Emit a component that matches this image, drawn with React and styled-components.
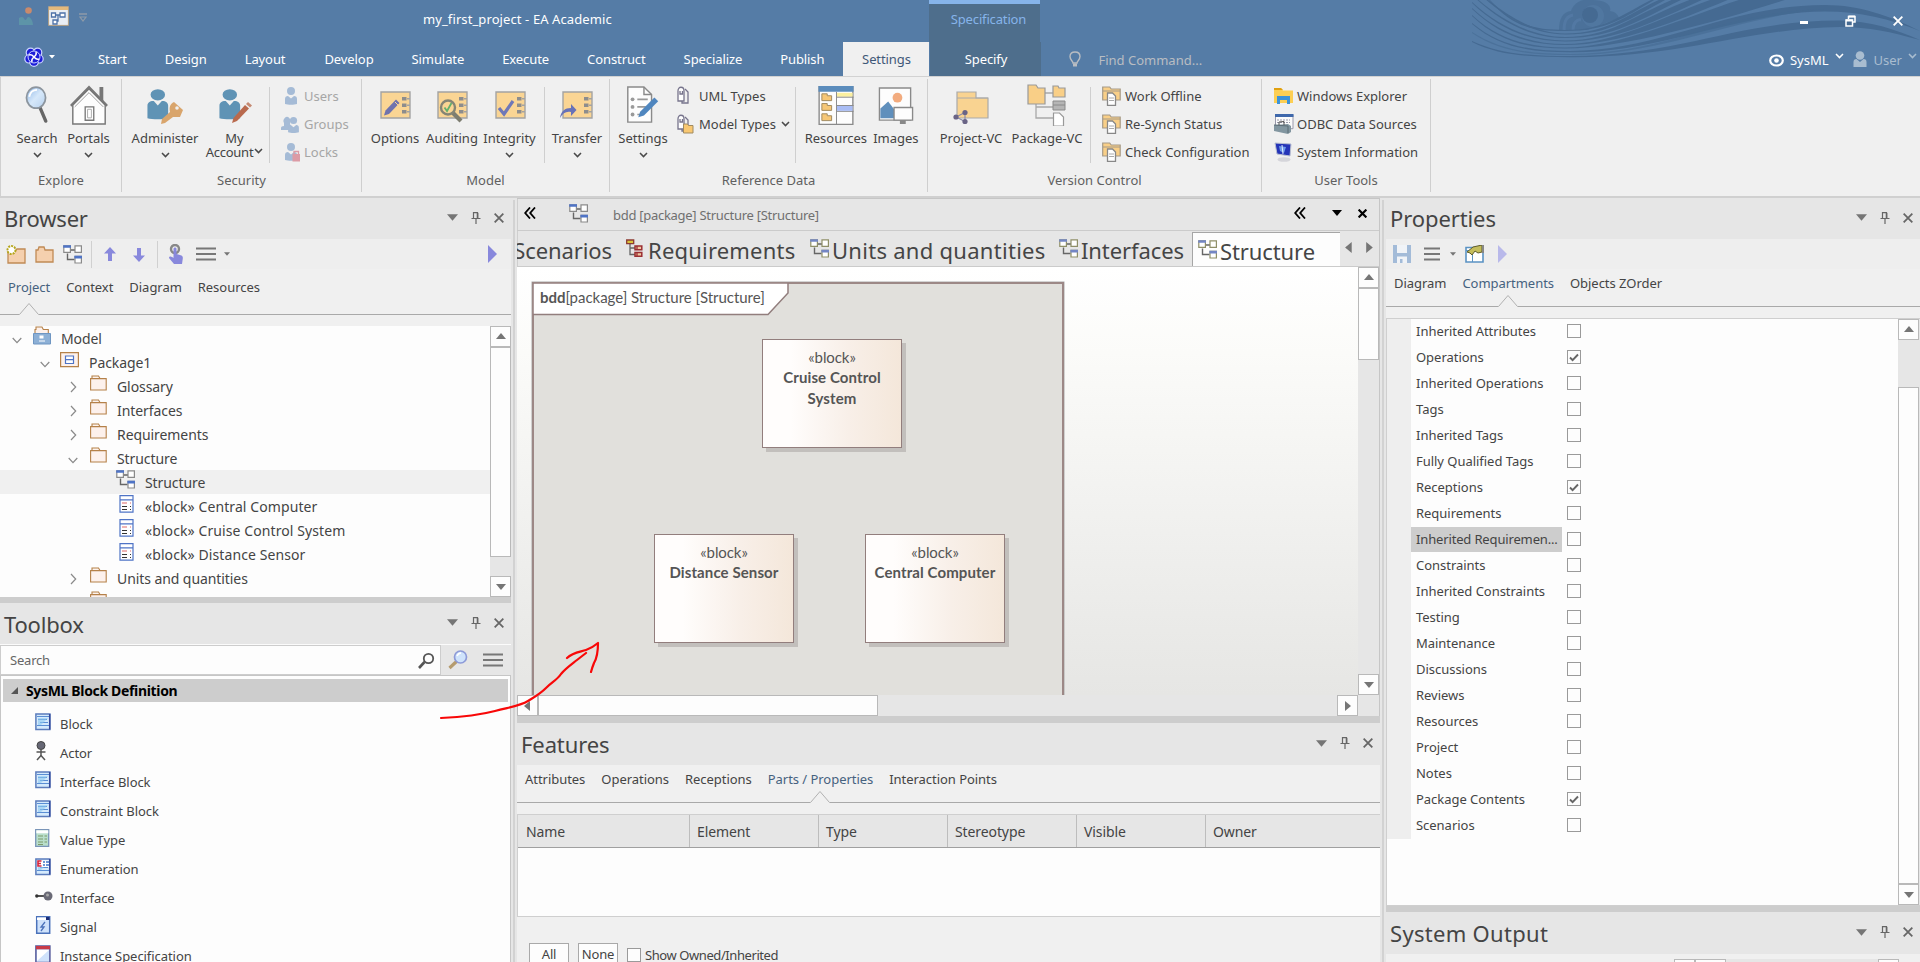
import React from "react";
import styled, { createGlobalStyle, css } from "styled-components";

const Global = createGlobalStyle`
  * { box-sizing: border-box; }
  html, body { margin: 0; padding: 0; }
  body {
    width: 1920px; height: 962px; overflow: hidden; background: #e6e6e6;
    font-family: "Noto Sans", "Open Sans", sans-serif; font-size: 13px; color: #444;
    white-space: nowrap; line-height: 18px;
  }
  svg { display: block; flex: none; }
`;

/* ---------- window frame ---------- */
const Window = styled.div`
  position: relative; width: 1920px; height: 962px; overflow: hidden;
  display: flex; flex-direction: column;
`;
const Header = styled.header`
  position: relative; height: 76px; flex: none; background: #557ca6; color: #fff;
  display: flex; flex-direction: column;
`;
const WaveArt = styled.svg`position: absolute; right: 0; top: 0;`;
const TitleRow = styled.div`
  position: relative; height: 42px; display: flex; align-items: flex-start;
`;
const QuickBar = styled.div`
  width: 423px; padding: 6px 0 0 19px; display: flex; gap: 0;
  svg + svg { margin-left: 10px; }
`;
const AppTitle = styled.div`width: 506px; padding-top: 10px; letter-spacing: 0.1px;`;
const ContextTitle = styled.div`
  width: 111px; height: 42px; border-top: 4px solid #86b4ea; background: #4e6e8c;
  color: #86b4ea; text-align: center; padding: 6px 0 0 8px; letter-spacing: -0.15px;
`;
const WindowButtons = styled.div`
  margin-left: auto; padding: 14px 17px 0 0; display: flex; gap: 37px; align-items: center;
`;
const TabRow = styled.div`position: relative; display: flex; height: 34px; align-items: stretch;`;
const AppMenu = styled.div`width: 79px; padding: 5px 0 0 24px; display: flex; gap: 5px;`;
const RibbonTab = styled.div`
  padding: 8px 19px 0; color: #fff; letter-spacing: -0.09px;
  ${(p) => p.$wide && css`padding-right: 20px;`}
  ${(p) => p.$active && css`background: #f0f0f0; color: #3f5878; width: 86px; margin-left: 0; padding: 8px 0 0; text-align: center;`}
  ${(p) => p.$context && css`background: #4e6e8c; width: 111px; margin-left: 1px; padding: 8px 0 0; text-align: center;`}
`;
const FindBox = styled.div`
  display: flex; padding: 9px 0 0 28px; gap: 17px; color: #b9bdc2;
`;
const UserArea = styled.div`
  margin-left: auto; padding: 9px 3px 0 0; display: flex;
`;
const UserText = styled.span`
  margin: 0 6px 0 ${(p) => p.$left}px; color: ${(p) => p.$tone};
`;
const UserChevron = styled.span`padding-top: 2px; margin-right: ${(p) => p.$r || 0}px;`;

/* ---------- ribbon ---------- */
const Ribbon = styled.section`
  height: 122px; flex: none; background: #f0f0f0; border-top: 1px solid #d2d2d2;
  border-bottom: 2px solid #d0d0d0; border-left: 1px solid #d0d0d0; display: flex; padding-top: 2px;
`;
const Group = styled.div`
  width: ${(p) => p.$w}px; height: 113px; border-right: 1px solid #cfcfcf;
  display: flex; flex-direction: column;
`;
const GroupBody = styled.div`display: flex; height: 92px; padding-left: ${(p) => p.$pad}px;`;
const GroupName = styled.div`text-align: center; color: #606060;`;
const Divider = styled.div`width: 1px; height: 76px; margin: 8px 5px 0; background: #cfcfcf;`;
const BigButtonBox = styled.div`
  width: ${(p) => p.$w}px; display: flex; flex-direction: column; align-items: center;
`;
const BigIcon = styled.div`height: 52px; display: flex; align-items: center; justify-content: center;`;
const BigLabel = styled.div`height: 14px; line-height: 14px;`;
const BigChevron = styled.div`padding-top: 7px;`;
const SecondLine = styled.div`
  display: flex; gap: 1px; line-height: 14px; letter-spacing: -0.25px;
  svg { margin-top: 3px; }
`;
const SmallList = styled.div`
  display: flex; flex-direction: column; padding-left: ${(p) => p.$pad}px; padding-top: 3px;
`;
const SmallItem = styled.div`
  height: 28px; display: flex; align-items: center; gap: ${(p) => p.$gap || 4}px;
  color: ${(p) => (p.$dim ? "#a6a6a6" : "#444")};
`;

/* ---------- docked panels ---------- */
const Workspace = styled.main`flex: 1; display: flex; min-height: 0;`;
const Column = styled.div`
  width: ${(p) => p.$w}px; display: flex; flex-direction: column; min-height: 0; flex: none;
`;
const VSplit = styled.div`
  width: ${(p) => p.$w}px; flex: none; background: #e6e6e6; padding: 2px 2px 0 2px;
  &::before { content: ""; display: block; height: 100%; background: #d2d2d2; }
`;
const HSplit = styled.div`height: ${(p) => p.$h}px; flex: none; background: #cdcdcd;`;
const PanelHead = styled.div`
  height: ${(p) => p.$h}px; flex: none; padding: 0 7px 0 ${(p) => p.$left}px; background: #e6e6e6;
  display: flex; align-items: center; justify-content: space-between;
`;
const PanelTitle = styled.h2`
  margin: 0; font-weight: 400; font-size: 22px; line-height: 30px; letter-spacing: ${(p) => p.$ls || -0.2}px; color: #444;
  padding-bottom: ${(p) => p.$up || 0}px;
`;
const PanelTools = styled.div`display: flex; align-items: center; gap: 13px; padding-bottom: 2px;`;
const Toolbar = styled.div`
  height: 30px; flex: none; background: #eeeeee; display: flex; align-items: center;
  padding: 0 14px 0 ${(p) => p.$left}px;
`;
const ToolSlot = styled.div`
  width: ${(p) => p.$w}px; display: flex; justify-content: flex-start; padding-left: ${(p) => p.$pad || 0}px;
  ${(p) => p.$push && css`margin-left: auto;`}
`;
const ToolDivider = styled.div`width: 1px; height: 27px; background: #d0d0d0; margin-right: ${(p) => p.$r}px;`;
const TabStrip = styled.div`
  height: ${(p) => p.$h}px; flex: none; background: #f0f0f0; padding: 0 0 0 ${(p) => p.$left}px;
  display: flex; gap: 16px; border-bottom: 1px solid #a9a9a9; position: relative;
`;
const StripTab = styled.div`
  position: relative; padding-top: ${(p) => p.$top}px; color: ${(p) => (p.$active ? "#46627f" : "#444")};
  letter-spacing: -0.04px;
`;
const Notch = styled.svg`position: absolute; left: calc(50% - 10px); bottom: -1px;`;
const Gap = styled.div`height: ${(p) => p.$h}px; flex: none; background: #f0f0f0;`;

/* ---------- scroll bars ---------- */
const ScrollTrack = styled.div`
  flex: none; display: flex; background: #e6e6e6;
  ${(p) => (p.$across ? css`height: 21px; flex-direction: row; padding-right: 21px;` : css`width: 21px; flex-direction: column;`)}
`;
const ScrollButton = styled.div`
  width: 21px; height: 21px; flex: none; background: #fdfdfd; border: 1px solid #b9b9b9;
  display: flex; align-items: center; justify-content: center;
`;
const ScrollThumb = styled.div`
  background: #fdfdfd; border: 1px solid #b9b9b9; flex: none;
  ${(p) => (p.$across ? css`width: ${p.$len}px; height: 21px;` : css`height: ${p.$len}px; width: 21px; margin-top: ${p.$at || 0}px;`)}
`;
const Spacer = styled.div`flex: 1;`;

/* ---------- browser tree ---------- */
const TreeArea = styled.div`height: 271px; flex: none; display: flex; background: #fdfdfd; overflow: hidden;`;
const TreeList = styled.div`flex: 1; display: flex; flex-direction: column; overflow: hidden;`;
const TreeRow = styled.div`
  height: 24px; flex: none; display: flex; align-items: center; padding-left: ${(p) => p.$depth * 28 + 12}px;
  font-size: 14px; letter-spacing: ${(p) => (p.$wide ? 0.09 : -0.08)}px; background: ${(p) => (p.$selected ? "#f0f0f0" : "transparent")};
`;
const Expander = styled.span`width: 19px; padding-top: ${(p) => (p.$open ? 4 : 1)}px;`;
const TreeIcon = styled.span`width: 30px; height: 20px; margin-top: -5px; display: flex; align-items: center; padding-left: ${(p) => p.$pad}px;`;
const TreeText = styled.span`padding-top: 1px;`;

/* ---------- toolbox ---------- */
const SearchRow = styled.div`
  height: 31px; flex: none; border-top: 1px solid #fbfbfb; display: flex; align-items: center; background: #e6e6e6;
`;
const SearchBox = styled.div`
  width: 441px; height: 30px; border: 1px solid #cdcdcd; background: #fdfdfd; color: #666;
  display: flex; align-items: center; justify-content: space-between; padding: 0 5px 0 9px; letter-spacing: -0.2px;
`;
const ToolList = styled.div`
  flex: 1; background: #fdfdfd; border: 1px solid #c6c6c6; border-bottom: 0; overflow: hidden; padding: 3px 2px 0;
`;
const ToolHeader = styled.div`
  height: 23px; background: #cdcdcd; color: #000; font-weight: 700; font-size: 14px; letter-spacing: -0.34px;
  display: flex; align-items: center; gap: 8px; padding-left: 8px; margin-bottom: 7px;
`;
const ToolItem = styled.div`
  height: 29px; display: flex; align-items: center; padding-left: 30px; letter-spacing: -0.06px;
`;
const ToolIcon = styled.span`width: 27px; display: flex; margin-top: -3px; padding-left: 2px;`;

/* ---------- diagram view ---------- */
const ViewFrame = styled.div`
  height: 518px; flex: none; border: 1px solid #c6c6c6; border-bottom: 0; border-left-width: 0;
  display: flex; flex-direction: column; box-shadow: inset 1px 0 #cfcfcf;
`;
const Breadcrumb = styled.div`
  height: 32px; flex: none; display: flex; align-items: center; padding: 0 12px 3px 7px;
  border-bottom: 1px solid #cbcbcb; color: #707070;
`;
const CrumbText = styled.span`flex: 1; padding: 3px 0 0 25px; letter-spacing: -0.28px;`;
const CrumbTools = styled.div`
  display: flex; align-items: center; color: #000;
  svg:nth-child(2) { margin: 0 16px 0 26px; }
`;
const DocTabs = styled.div`
  height: 36px; flex: none; display: flex; overflow: hidden; border-bottom: 1px solid #cbcbcb;
`;
const DocTab = styled.div`
  display: flex; height: 36px; width: ${(p) => p.$w}px; flex: none; font-size: 22px; line-height: 30px; color: #454545;
  align-items: center; gap: ${(p) => p.$gap || 4}px; letter-spacing: ${(p) => p.$ls || -0.1}px; padding-top: 1px;
  svg { margin-top: -2px; }
  ${(p) => p.$clip && css`justify-content: flex-end; padding-right: 14px;`}
  ${(p) => p.$active && css`background: #fdfdfd; border: 1px solid #a6a6a6; border-bottom: 0; border-right: 0; padding-left: 5px; margin-top: 1px; padding-top: 0;`}
`;
const DocArrows = styled.div`display: flex; gap: 9px; padding: 11px 0 0 4px;`;
const CanvasRow = styled.div`height: 428px; flex: none; display: flex;`;
const Canvas = styled.div`
  position: relative; flex: 1; overflow: hidden; background: linear-gradient(#ffffff, #fbfbf9 20%, #e6e6e4);
  font-family: Lato, "Noto Sans", sans-serif; font-size: 15px; color: #555; letter-spacing: -0.08px;
`;
const Frame = styled.div`
  position: absolute; left: 15px; top: 15px; width: 532px; height: 440px; background: #e1e0dc;
  border: 2px solid #9c8886; box-shadow: 0 0 0 0.5px #aaa;
`;
const FrameName = styled.div`
  position: relative; width: 256px; height: 32px; padding: 3px 0 0 6px;
  svg { position: absolute; left: -1px; top: -1px; }
  span { position: relative; line-height: 20px; letter-spacing: -0.03px; }
`;
const Block = styled.div`
  position: absolute; left: ${(p) => p.$x}px; top: ${(p) => p.$y}px; width: 140px; height: 109px;
  border: 1.5px solid #927e7d; background: linear-gradient(90deg, #fffdfc 20%, #f8efe8 62%, #f4e7da);
  box-shadow: 4px 4px 0 #c2bfbc; text-align: center; line-height: 20px; padding: 7px 10px 0;
  white-space: normal;
  b { display: block; line-height: 21px; margin: 0 -10px; letter-spacing: 0.1px; }
`;

/* ---------- features ---------- */
const Table = styled.div`
  height: 103px; flex: none; border: 1px solid #cfcfcf; border-right: 0; background: #fdfdfd;
`;
const TableHead = styled.div`
  height: 33px; background: #e6e6e6; border-bottom: 1px solid #a0a0a0; display: flex; font-size: 14px; letter-spacing: -0.1px;
`;
const HeadCell = styled.div`
  width: ${(p) => p.$w}px; padding: 8px 0 0 7px; border-right: ${(p) => (p.$last ? 0 : 1)}px solid #bdbdbd;
  &:first-child { padding-left: 8px; }
`;
const FeatureActions = styled.div`
  flex: 1; background: #f0f0f0; display: flex; padding: 26px 0 0 12px; align-items: flex-start;
`;
const PushButton = styled.div`
  width: 40px; height: 24px; border: 1px solid #a9a9a9; background: #fdfdfd; text-align: center; padding-top: 1px; margin-right: 9px;
  letter-spacing: -0.2px;
`;
const OptionLabel = styled.span`padding: 3px 0 0 4px; letter-spacing: -0.42px;`;

/* ---------- properties ---------- */
const PropsArea = styled.div`
  height: 588px; flex: none; display: flex; border: 1px solid #cfcfcf; border-right: 0; background: #fdfdfd;
`;
const Gutter = styled.div`width: 24px; height: 520px; background: #eeeeee;`;
const PropList = styled.div`flex: 1;`;
const PropRow = styled.div`height: 26px; display: flex; align-items: flex-start;`;
const PropName = styled.div`
  width: 151px; height: 25px; padding: 3px 0 0 5px; margin-right: 5px; letter-spacing: -0.03px;
  background: ${(p) => (p.$selected ? "#cdcdcd" : "transparent")};
  ${(p) => p.$selected && css`letter-spacing: -0.15px;`}
`;
const CheckBox = styled.div`
  width: 14px; height: 14px; border: 1px solid #9a9a9a; background: #fdfdfd; margin-top: ${(p) => p.$top}px;
  display: flex; align-items: center; justify-content: center;
`;
const RightEdge = styled.div`width: 1px; background: #e6e6e6;`;
const OutputBar = styled.div`
  flex: 1; background: #f0f0f0; padding: 5px 21px 0 0; display: flex; justify-content: flex-end;
`;
const OutputBox = styled.div`
  width: ${(p) => p.$w}px; height: 12px; border: 1px solid #b9b9b9; background: ${(p) => (p.$track ? "#e6e6e6" : "#fdfdfd")};
  ${(p) => p.$track && css`border-color: #e6e6e6;`}
`;

const Stroke = styled.svg`position: absolute; left: 436px; top: 638px;`;

/* ---------- glyphs ---------- */
const Chevron = ({ c = "#4a4a4a" }) => (
  <svg width="9" height="6" viewBox="0 0 9 6"><path d="M1 1l3.5 3.6L8 1" fill="none" stroke={c} strokeWidth="1.5" /></svg>
);
const Tri = ({ dir, c = "#757575", s = 10 }) => {
  const d = { up: "M0 7L5 1l5 6z", down: "M0 2h10L5 8z", left: "M7 0v10L1 5z", right: "M2 0v10l6-5z" }[dir];
  return <svg width={s} height={s} viewBox="0 0 10 10"><path d={d} fill={c} /></svg>;
};
const Cross = ({ s = 9, c = "#666", w = 1.6 }) => (
  <svg width={s} height={s} viewBox="0 0 9 9"><path d="M.6.6l7.8 7.8M8.4.6L.6 8.4" stroke={c} strokeWidth={w} /></svg>
);
const Pin = () => (
  <svg width="10" height="12" viewBox="0 0 10 12"><path d="M2.5 0v6M2 .6h5M6.5 0v6M.5 6.5h9M5 7v5" fill="none" stroke="#666" strokeWidth="1.2" /><path d="M5.8 1h1.6v5H5.8z" fill="#666" /></svg>
);
const HeadTools = () => (
  <PanelTools><Tri dir="down" s={11} /><Pin /><Cross s={10} /></PanelTools>
);
const Guillemet = () => (
  <svg width="12" height="12" viewBox="0 0 12 12"><path d="M6 .5L1.2 6 6 11.5M11 .5L6.2 6l4.8 5.5" fill="none" stroke="#000" strokeWidth="1.8" /></svg>
);
const Lines = ({ w = 20 }) => (
  <svg width={w} height="14" viewBox={`0 0 ${w} 14`}><path d={`M0 1.5h${w}M0 7h${w}M0 12.5h${w}`} stroke="#777" strokeWidth="2.2" /></svg>
);
const DiagramIcon = ({ line = "#8a8a8a", head = "#4f74c6" }) => (
  <svg width="19" height="19" viewBox="0 0 19 19">
    <path d="M8 5h4M4.5 8.5v6h7" fill="none" stroke="#666" strokeWidth="1.4" />
    <g fill="#fff" stroke={line} strokeWidth="1.2"><path d="M.8.8h6.6v6.6H.8zM12 .8h6.4v6.6H12zM12 11.4h6.4V18H12z" /></g>
    <path d="M.2.2h7.8v2.6H.2zM11.4 10.8H19v2.8h-7.6z" fill={head} />
  </svg>
);
const ReqIcon = () => (
  <svg width="17" height="19" viewBox="0 0 17 19">
    <path d="M4 4v11.5h5M4 9h5" fill="none" stroke="#666" strokeWidth="1.3" />
    <path d="M.7 1h7v3.6h-7z" fill="#d9c43c" stroke="#8d3b32" strokeWidth="1.3" />
    <path d="M9 7h6.8v3.8H9zM9 13.5h6.8v3.8H9z" fill="#f0c9a0" stroke="#9b2f33" strokeWidth="1.5" /><path d="M11 7v4M11 13v4.5" stroke="#9b2f33" strokeWidth="1.3" />
  </svg>
);
const FolderIcon = () => (
  <svg width="17" height="17" viewBox="0 0 17 17"><path d="M2 3.5V1h6.5l1.5 2.5" fill="#fdf3ee" stroke="#b58149" strokeWidth="1.1" /><path d="M.6 3.6h15.6V15H.6z" fill="#fdf1ec" stroke="#b58149" strokeWidth="1.1" /></svg>
);
const ModelIcon = () => (
  <svg width="18" height="19" viewBox="0 0 18 19"><path d="M2 8V3.5h1V1h6l1.3 2.5h5V8" fill="#fdf1ec" stroke="#b58149" strokeWidth="1.1" /><path d="M.5 7.5h17V18H.5z" fill="#8db0d6" stroke="#6f96c2" /><path d="M6.5 9.5h4v3h-4z" fill="#fff" /><path d="M6 15h6" stroke="#fff" /></svg>
);
const PackageIcon = () => (
  <svg width="19" height="16" viewBox="0 0 19 16"><path d="M.6.6h17.8v14H.6z" fill="#fdf1ec" stroke="#b58149" strokeWidth="1.2" /><path d="M5.5 4h8v7.500h-8zM5.500 7.700h8" fill="#fff" stroke="#4f74c6" strokeWidth="1.2" /></svg>
);
const BlockIcon = () => (
  <svg width="15" height="18" viewBox="0 0 15 18"><path d="M1 .7h13v16.500H1zM1 4.800h13" fill="#fff" stroke="#4f74c6" strokeWidth="1.200" /><path d="M3 8h5M11 8h1" stroke="#e06a6a" strokeWidth="1.200" /><path d="M3 11.500h5M11 11.500h1M3 14.500h5M11 14.500h1" stroke="#333" strokeWidth="1.200" /></svg>
);

const PersonShape = ({ c }) => (
  <g fill={c} transform="translate(-2 3.5) scale(1.15 .9)"><circle cx="12" cy="7" r="6.300" /><path d="M3 33V19c0-3 2-5 5-5h.5L12 19l3.500-5h.5c3 0 5 2 5 5v14c-4 1.500-14 1.500-18 0z" /></g>
);
const Search3D = () => (
  <svg width="24" height="38" viewBox="0 0 24 39">
    <defs><linearGradient id="lens" x1="0" y1="0" x2="1" y2="1"><stop offset="0" stopColor="#8eb6e6" /><stop offset=".5" stopColor="#d6e8fa" /><stop offset="1" stopColor="#b5d0ee" /></linearGradient></defs>
    <path d="M15 22l6 14" stroke="#666" strokeWidth="3.500" strokeLinecap="round" /><ellipse cx="11" cy="12" rx="9.800" ry="10.800" fill="url(#lens)" stroke="#8c959e" strokeWidth="1.800" /><path d="M4 11c1-5 4-7 8-7" stroke="#fff" strokeWidth="2" fill="none" />
  </svg>
);
const House = () => (
  <svg width="40" height="40" viewBox="0 0 40 42">
    <path d="M31 16V2h4v18" fill="#777" /><path d="M3 21L20 4l17 17v20H3z" fill="#fdfdfd" stroke="#777" strokeWidth="1.500" /><path d="M1 22L20 2.500 39 22" fill="none" stroke="#777" strokeWidth="2.600" /><path d="M5 23L20 8l15 15" fill="none" stroke="#999" strokeWidth="1" /><path d="M16 23h9v14h-9z" fill="#fff" stroke="#777" strokeWidth="1.400" /><path d="M18.500 25.500h4v9h-4z" fill="none" stroke="#aaa" />
  </svg>
);
const AdminIcon = () => (
  <svg width="38" height="40" viewBox="0 0 38 40"><PersonShape c="#5f93b5" /><path d="M28 17l9 8-3 7-7 0-8 6-4 1 1-5 8-7c-1-5 0-8 4-10z" fill="#d9a56c" /><circle cx="31" cy="23" r="1.800" fill="#f0f0f0" /></svg>
);
const AccountIcon = () => (
  <svg width="34" height="40" viewBox="0 0 34 40"><PersonShape c="#5f93b5" /><path d="M14 38l1.500-5L27 20l4 3.500L19 36z" fill="#b96a4e" /><path d="M28 19l2-2 4 3.500-2 2z" fill="#c58a73" /></svg>
);
const Card = ({ children }) => (
  <svg width="36" height="40" viewBox="0 0 36 40" overflow="visible">
    <path d="M4 7h29v26H4z" fill="#fad594" stroke="#a3a3a3" strokeWidth="1.400" />
    <g fill="#8d8d8d"><path d="M25 12h4.500v3.500H25zM25 18.500h4.500V22H25zM25 25h4.500v3.500H25z" /></g>
    <path d="M30 13.700h3M30 20.200h3M30 26.700h3" stroke="#a3a3a3" strokeWidth="1.400" />{children}
  </svg>
);
const OptionsIcon = () => <Card><path d="M7 30.500l1.500-5L19 14.500l3.500 3.500L12 29z" fill="#6f73ae" /><path d="M18 17l3.500 3.500" stroke="#fad594" /></Card>;
const AuditIcon = () => (
  <Card><path d="M19 28l8 8" stroke="#7d7d70" strokeWidth="4.200" /><circle cx="14" cy="22.500" r="7" fill="#fad594" stroke="#858575" strokeWidth="2.400" /><path d="M10.500 22.500l2.500 3.500 4.500-8" fill="none" stroke="#63b06b" strokeWidth="1.800" /></Card>
);
const IntegrityIcon = () => <Card><path d="M7 23l5 6L21 16" fill="none" stroke="#6f78b8" strokeWidth="3.200" /></Card>;
const TransferIcon = () => <Card><path d="M1 33c1-7 5-10 11-10v-4l5.500 6-5.500 6v-4c-5-1-8 1-11 6z" fill="#6872b8" /></Card>;
const SettingsIcon = () => (
  <svg width="34" height="38" viewBox="0 0 34 40">
    <path d="M1 1h17l8 8v29H1z" fill="#fdfdfd" stroke="#8a8a8a" strokeWidth="1.500" /><path d="M18 1v8h8" fill="none" stroke="#8a8a8a" strokeWidth="1.500" />
    <g fill="#999"><circle cx="6" cy="14" r="2" /><circle cx="6" cy="22" r="2" /><circle cx="6" cy="30" r="2" /></g><path d="M11 14h11M11 22h9M11 30h3" stroke="#999" strokeWidth="1.800" />
    <path d="M12 33l2-6L29 12l4 4L18 31z" fill="#4f86bf" />
  </svg>
);
const ResourcesIcon = () => (
  <svg width="36" height="39" viewBox="0 0 36 40"><path d="M.7.7h34.600v38.600H.7z" fill="#fdfdfd" stroke="#8a8a8a" strokeWidth="1.400" /><path d="M0 0h36v6H0z" fill="#5b8cbc" /><path d="M19 7h16v4H19z" fill="#fbf0a0" /><path d="M18.500 6v33M19 11.500h17M19 20h17M19 26h17" stroke="#8a8a8a" /><path d="M19 20.500h16v5H19z" fill="#a9bdf5" />
    <g fill="#f6c777" stroke="#a08a60"><path d="M3.500 8v7h10V10H9V8zM3.500 18v7h10v-5H9v-2zM3.500 28.500v7h10v-5H9v-2z" /></g></svg>
);
const ImagesIcon = () => (
  <svg width="36" height="39" viewBox="0 0 36 40"><path d="M1 2h32v33H1z" fill="#fdfdfd" stroke="#8a8a8a" strokeWidth="1.400" /><circle cx="19.500" cy="12" r="5" fill="#f2ab7e" /><path d="M2 23l8-7 13 17H2z" fill="#5f8fbc" /><path d="M16 22h19v13H16z" fill="#fdfdfd" stroke="#8a8a8a" strokeWidth="1.400" /><path d="M22 35h6v4h-6z" fill="#888" /></svg>
);
const ProjectVC = () => (
  <svg width="36" height="40" viewBox="0 0 36 40"><path d="M4 13V7h19v6h12v20H4z" fill="#f9d391" stroke="#aaa" strokeWidth="1.200" /><path d="M4 13h31" stroke="#aaa" /><path d="M3 32l9-4.500M3 32l9 4.500M12 27v9" stroke="#8a8aa8" strokeWidth="1.200" /><g fill="#6a6486"><circle cx="3" cy="32" r="2.600" /><circle cx="12" cy="27.500" r="2.600" /><circle cx="12" cy="36.500" r="2.600" /></g></svg>
);
const PackageVC = () => (
  <svg width="40" height="42" viewBox="0 0 40 42"><path d="M9 20v14h17M9 23h17M18 9h8" fill="none" stroke="#a8a8a8" strokeWidth="1.300" /><g fill="#f9cf87" stroke="#999" strokeWidth="1.200"><path d="M1 20V1h8l2 3h7v16zM26 13V2h5l1 2h6v9z" /></g><path d="M26 17h12v9H26z" fill="#b5b5b5" stroke="#8a8a8a" /><path d="M26 21h12" stroke="#8a8a8a" /><path d="M26.500 29h6l4 4v9h-10z" fill="#fff" stroke="#999" strokeWidth="1.200" /></svg>
);
const SmallPerson = ({ two, lock }) => (
  <svg width="20" height="20" viewBox="0 0 20 20"><g fill="#a5bbd6">{two && <path d="M3 12V9a3.500 4 0 1 1 6 0l1 7H0v-2q0-2 3-2z" />}<g transform={two ? "translate(3.500 2) scale(.9)" : "translate(0 0)"}><circle cx="10" cy="5" r="4" /><path d="M4 18v-5c0-2 1-3 3-3l3 2.500 3-2.500c2 0 3 1 3 3v5c-3 1-9 1-12 0z" /></g></g>{lock && <><path d="M11.500 12h7.500v7.500h-7.500z" fill="#dc9ba5" /><path d="M13 12V9.500h4.500V12" fill="none" stroke="#dc9ba5" strokeWidth="1.300" /></>}</svg>
);
const ClipIcon = ({ folder }) => (
  <svg width="18" height="20" viewBox="0 0 18 20"><path d="M2 15V5c0-5 6-5 6 0v10z" fill="#fdfdfd" stroke="#77748c" strokeWidth="1.300" /><path d="M6 15v2h6V6l-3-3M4 5v3h2.500V5" fill="none" stroke="#77748c" strokeWidth="1.300" />{folder && <path d="M7.500 19v-9h4l1 1.500H17V19z" fill="#f9c872" stroke="#a08a60" />}</svg>
);
const VcSmall = () => (
  <svg width="19" height="20" viewBox="0 0 19 20"><path d="M.7 14V1h7l1.500 2h9v11z" fill="#f9cf87" stroke="#a59a88" strokeWidth="1.200" /><path d="M1 5h17" stroke="#a59a88" /><path d="M5.500 7h5l3 3v9.300h-8z" fill="#fff" stroke="#888" strokeWidth="1.300" /><path d="M7 12h5M7 14.500h5" stroke="#aaa" /></svg>
);
const ExplorerIcon = () => (
  <svg width="19" height="18" viewBox="0 0 19 18"><path d="M0 16V1h7l2 2.500h10V16z" fill="#fdcf53" /><path d="M0 1h7l2 2H0z" fill="#e0a010" /><path d="M3 17V9h13v8h-3v-4H6v4z" fill="#3d93d8" /></svg>
);
const OdbcIcon = () => (
  <svg width="20" height="20" viewBox="0 0 20 20"><path d="M1.500.7h17.500v14H1.500z" fill="#fbfbfb" stroke="#99a" /><path d="M1 0h18.500v3H1z" fill="#3f68ab" /><path d="M3 6h13M3 8.500h13" stroke="#99a" strokeDasharray="2 1" /><path d="M0 11l14-1 3 2v6l-3 2-14-3z" fill="#8296a0" /><path d="M0 11l14 1v7" fill="none" stroke="#5b6c75" /><path d="M5 11V8l5-.5V11" fill="none" stroke="#555" /></svg>
);
const SysIcon = () => (
  <svg width="19" height="20" viewBox="0 0 19 20"><path d="M1 1l16 1-1 12L3 12z" fill="#2434b8" stroke="#b9bfd0" /><path d="M5 4l7 1-2 6-4-2z" fill="#6f9bea" /><path d="M8 3l1 9" stroke="#dce8ff" /><ellipse cx="10" cy="17.500" rx="6.500" ry="2.300" fill="#d5d5da" /></svg>
);
const MagnifyBlue = () => (
  <svg width="20" height="20" viewBox="0 0 20 20"><path d="M1.500 18l7-6.500" stroke="#b59b6e" strokeWidth="3.200" /><circle cx="12.500" cy="7" r="6" fill="#cfe3fb" stroke="#8d9ad8" strokeWidth="1.700" /><path d="M9 6c1-2 2-3 4-3" stroke="#fff" strokeWidth="1.500" fill="none" /></svg>
);
const MagnifyDark = () => (
  <svg width="17" height="17" viewBox="0 0 17 17"><path d="M1 16l5.500-6" stroke="#555" strokeWidth="2.600" /><circle cx="10.500" cy="6.500" r="4.700" fill="none" stroke="#555" strokeWidth="1.800" /></svg>
);

const ElementIcon = ({ kind }) => {
  if (kind === "actor")
    return <svg width="16" height="20" viewBox="0 0 16 20"><circle cx="6" cy="4.500" r="4" fill="#666775" stroke="#444" /><path d="M6 8.500v6M1.500 11h9M6 14.500L2 19M6 14.500l4 4.500" stroke="#555" strokeWidth="1.500" fill="none" /></svg>;
  if (kind === "interface")
    return <svg width="19" height="12" viewBox="0 0 19 12"><path d="M1 6h10" stroke="#333" strokeWidth="1.700" /><circle cx="1.800" cy="6" r="1.700" fill="#333" /><circle cx="13" cy="6" r="4.500" fill="#6a6a76" /><circle cx="12.500" cy="5" r="1.500" fill="#aaa" /></svg>;
  if (kind === "value")
    return <svg width="15" height="18" viewBox="0 0 15 18"><path d="M.7.7h13v16.600H.7z" fill="#b9dfcb" stroke="#7a95b8" strokeWidth="1.300" /><path d="M1.300 1.300h12v3h-12z" fill="#fff" /><path d="M3 7h5M9.500 7h2.500M3 10h5M9.500 10h2.500M3 13h5M9.500 13h2.500M3 15.500h5" stroke="#7d9a6b" strokeWidth="1.200" /></svg>;
  if (kind === "signal")
    return <svg width="16" height="18" viewBox="0 0 16 18"><path d="M1.700.7h13v16.600h-13z" fill="#cfe2fb" stroke="#4b72ba" strokeWidth="1.500" /><path d="M2 1.500h9v2.500H2z" fill="#fff" /><path d="M11 1h3.500v3H11z" fill="#1c2f78" /><path d="M10 6L6 11h3l-3 4" fill="none" stroke="#4b72ba" strokeWidth="1.300" /></svg>;
  if (kind === "instance")
    return <svg width="16" height="18" viewBox="0 0 16 18"><path d="M.9.9h14v16.500H.9z" fill="#cfe2fb" stroke="#555a9a" strokeWidth="1.500" /><path d="M2 16V5h12z" fill="#fff" /><path d="M1 1h14v3.300H1z" fill="#c83a48" /></svg>;
  return (
    <svg width="16" height="18" viewBox="0 0 16 18"><path d="M.9.9h14v15.500H.9z" fill="#d5eafc" stroke="#5b7cbc" strokeWidth="1.500" /><path d="M2 3.500h12M3 6.500h9M5 9.500h8M2 12.500h12" stroke="#5a8ed4" strokeWidth="1.100" /><path d="M3 5h10l-7 7H3z" fill="#8cc8f0" opacity=".6" /><path d="M14.700 1v15.500" stroke="#34489a" strokeWidth="1.500" />
      {kind === "enum" && <><path d="M2 2.500h12v6.500H2z" fill="#fff" /><path d="M6.500 3H3v5h3.500M3 5.500h3" fill="none" stroke="#d8243c" strokeWidth="1.600" /><path d="M8 4h2M8 7h2M11 4h3M11 7h3" stroke="#3f74c8" strokeWidth="1.300" /></>}
    </svg>
  );
};

/* each strand: left edge y, lowest y, x where it leaves the top, width there */
const strands = [
  [-2, 30, 213, 3], [-14, 33.500, 221, 6], [-6, 37, 234, 9], [2, 40.500, 252, 12], [8, 44, 273, 17], [15, 47.500, 302, 46],
];
const Waves = () => (
  <WaveArt width="450" height="76" viewBox="30 0 450 76">
    <g fill="#456a92">
      <path d="M119 30c0-12 4-18 12-19 3-9 12-13 22-11 12 0 19 5 17 11 6 1 8 4 9 7l-32 12z" opacity=".6" />
      <circle cx="153" cy="16" r="11" fill="#557ca6" opacity=".55" /><circle cx="150" cy="15" r="8" fill="#456a92" /><path d="M124 30c0-8 3-14 9-15M133 30c0-7 4-11 8-10" stroke="#557ca6" strokeWidth="3" fill="none" opacity=".7" />
      {strands.map(([l, b, x, t], i) => (
        <path key={i} d={`M${i ? 32 : 48} ${l}C${i ? 60 : 72} ${l + 26} 92 ${b} 125 ${b}C${165 + i * 3} ${b} ${x - 34 - i * 4} 16 ${x} -1H${x + t}C${x - 30 - i * 3 + t / 2} ${17 + i * 0.7} ${168 + i * 3} ${b + 1.3} 125 ${b + 1}C90 ${b + 1} ${i ? 60 : 72} ${l + 28} ${i ? 32 : 48} ${l + 1}z`} />
      ))}
      <path d="M32 23C60 46 90 51 130 51C220 51 290 5 385 5C420 5 450 16 480 31C450 19 420 11.500 385 11.500C300 12 220 53 130 52.200C90 52 60 48 32 24z" />
      <path d="M32 32C60 50 90 54 130 54C230 54 280 12 385 9C300 16 220 56 130 55C90 55 60 52 32 33z" opacity=".6" />
      <path d="M32 41C60 54 90 56 130 56C240 56 300 20 400 20.500C430 21 455 29 480 40C450 32 430 27 400 27C310 28 240 58 130 57.200C90 57 60 56 32 42z" />
    </g>
  </WaveArt>
);

/* ---------- composed parts ---------- */
const BigButton = ({ w, icon, label, menu, second }) => (
  <BigButtonBox $w={w}>
    <BigIcon>{icon}</BigIcon>
    <BigLabel>{label}</BigLabel>
    {second && <SecondLine>{second}<Chevron /></SecondLine>}
    {menu && <BigChevron><Chevron /></BigChevron>}
  </BigButtonBox>
);
const Strip = ({ h, left, top, tabs, active }) => (
  <TabStrip $h={h} $left={left}>
    {tabs.map((t) => (
      <StripTab key={t} $active={t === active} $top={top}>
        {t}
        {t === active && <Notch width="20" height="13" viewBox="0 0 20 13"><path d="M0 13L10 1.500 20 13z" fill="#f0f0f0" /><path d="M.5 12.500L10 1.500l9.500 11" fill="none" stroke="#b0b0b0" /></Notch>}
      </StripTab>
    ))}
  </TabStrip>
);
const VScroll = ({ len, at }) => (
  <ScrollTrack>
    <ScrollButton><Tri dir="up" /></ScrollButton><ScrollThumb $len={len} $at={at} /><Spacer /><ScrollButton><Tri dir="down" /></ScrollButton>
  </ScrollTrack>
);
const Check = () => <svg width="10" height="9" viewBox="0 0 10 9"><path d="M1 4.500l2.600 2.700L9 1.500" fill="none" stroke="#666" strokeWidth="1.900" /></svg>;

const tree = [
  [0, "open", <ModelIcon />, "Model", 2], [1, "open", <PackageIcon />, "Package1", 1],
  [2, "shut", <FolderIcon />, "Glossary", 3], [2, "shut", <FolderIcon />, "Interfaces", 3], [2, "shut", <FolderIcon />, "Requirements", 3],
  [2, "open", <FolderIcon />, "Structure", 3], [3, "", <DiagramIcon />, "Structure", 1],
  [3, "", <BlockIcon />, "«block» Central Computer", 4], [3, "", <BlockIcon />, "«block» Cruise Control System", 4], [3, "", <BlockIcon />, "«block» Distance Sensor", 4],
  [2, "shut", <FolderIcon />, "Units and quantities", 3], [2, "", <FolderIcon />, "", 3],
];
const elements = [
  ["block", "Block"], ["actor", "Actor"], ["block", "Interface Block"], ["block", "Constraint Block"], ["value", "Value Type"],
  ["enum", "Enumeration"], ["interface", "Interface"], ["signal", "Signal"], ["instance", "Instance Specification"],
];
const compartments = [
  "Inherited Attributes", "Operations*", "Inherited Operations", "Tags", "Inherited Tags", "Fully Qualified Tags", "Receptions*", "Requirements",
  "Inherited Requiremen...", "Constraints", "Inherited Constraints", "Testing", "Maintenance", "Discussions", "Reviews", "Resources", "Project",
  "Notes", "Package Contents*", "Scenarios",
];
const columns = [["Name", 172], ["Element", 129], ["Type", 129], ["Stereotype", 129], ["Visible", 129], ["Owner", 170]];

export default function App() {
  return (
    <Window>
      <Global />
      <Header>
        <Waves />
        <TitleRow>
          <QuickBar>
            <svg width="19" height="20" viewBox="0 0 19 20"><circle cx="9.500" cy="4.500" r="3.300" fill="#c98a6c" /><path d="M-3 19c0-5 3-8 6-8 2 0 2 3 3.500 3s1-3 3-3c2 0 4.500 4 4.500 8z" fill="#5d94a8" /></svg>
            <svg width="21" height="20" viewBox="0 0 21 20"><path d="M.6.6h19.800v18.800H.6z" fill="#e9eef4" stroke="#b39f83" /><path d="M1 1h19v3H1z" fill="#e3b97c" /><path d="M3.500 7h4v4h-4zM12 7h5v4h-5zM5 14h4v4H5zM8 9h4M10 9v6H9" fill="#fff" stroke="#4d72a8" strokeWidth="1.300" /></svg>
            <svg width="8" height="20" viewBox="0 0 8 20"><path d="M0 8h8" stroke="#8e9aa8" strokeWidth="1.500" /><path d="M1 11h6l-3 4z" fill="none" stroke="#8e9aa8" strokeWidth="1.200" /></svg>
          </QuickBar>
          <AppTitle>my_first_project - EA Academic</AppTitle>
          <ContextTitle>Specification</ContextTitle>
          <WindowButtons>
            <svg width="8" height="13" viewBox="0 0 8 13"><path d="M0 8.500h8" stroke="#fff" strokeWidth="3" /></svg>
            <svg width="11" height="12" viewBox="0 0 11 12"><path d="M3.500 4V1.500H10V7H7.500M1 5h6.500v6H1z" fill="none" stroke="#fff" strokeWidth="1.500" /><path d="M1 5.500h6.500M3.500 1.500H10" stroke="#fff" strokeWidth="2.200" /></svg>
            <Cross s={10} c="#fff" w={1.700} />
          </WindowButtons>
        </TitleRow>
        <TabRow>
          <AppMenu>
            <svg width="20" height="20" viewBox="0 0 20 20"><g fill="#1c1cd8" stroke="#c9d2ff" strokeWidth="1.200"><circle cx="6.500" cy="5.500" r="4.300" /><circle cx="13.500" cy="5.500" r="4.300" /><circle cx="4.800" cy="12" r="4" /><circle cx="15.200" cy="12" r="4" /><circle cx="10" cy="15" r="4.300" /></g><circle cx="10" cy="10" r="6.400" fill="#1c1cd8" /><circle cx="10" cy="10" r="6" fill="none" stroke="#c9d2ff" /><path d="M5 8c3-1 4 1 5 2s2 3 5 2M8 15c-1-3 1-4 2-5s3-2 2-5" stroke="#fff" strokeWidth="1.500" fill="none" /></svg>
            <svg width="6" height="20" viewBox="0 0 6 20"><path d="M0 8h6l-3 3.500z" fill="#fff" /></svg>
          </AppMenu>
          {["Start", "Design", "Layout", "Develop", "Simulate", "Execute", "Construct", "Specialize", "Publish"].map((t) => <RibbonTab key={t} $wide={t === "Layout"}>{t}</RibbonTab>)}
          <RibbonTab $active>Settings</RibbonTab>
          <RibbonTab $context>Specify</RibbonTab>
          <FindBox>
            <svg width="12" height="18" viewBox="0 0 12 18"><path d="M4 12c0-2-3-3-3-6.500C1 2.500 3 1 6 1s5 1.500 5 4.500C11 9 8 10 8 12z" fill="none" stroke="#b9bdc2" strokeWidth="1.400" /><path d="M4 12.500h4v3H4z" fill="#b9bdc2" /></svg>
            Find Command...
          </FindBox>
          <UserArea>
            <svg width="15" height="20" viewBox="0 0 15 20"><ellipse cx="7.500" cy="9.500" rx="6.300" ry="5" fill="none" stroke="#fff" strokeWidth="2.200" /><circle cx="7.500" cy="9.500" r="2.300" fill="#fff" /></svg>
            <UserText $left={6} $tone="#fff">SysML</UserText>
            <UserChevron $r={9}><Chevron c="#fff" /></UserChevron>
            <svg width="14" height="17" viewBox="0 0 14 17"><circle cx="7" cy="4.500" r="4.300" fill="#a9bdd0" /><path d="M.5 16V11c0-2 1-3 3-3L7 11l3.500-3c2 0 3 1 3 3v5z" fill="#a9bdd0" /></svg>
            <UserText $left={7} $tone="#a9bdd0">User</UserText>
            <UserChevron><Chevron c="#a9bdd0" /></UserChevron>
          </UserArea>
        </TabRow>
      </Header>

      <Ribbon>
        <Group $w={121}>
          <GroupBody $pad={10}>
            <BigButton w={52} icon={<Search3D />} label="Search" menu />
            <BigButton w={51} icon={<House />} label="Portals" menu />
          </GroupBody>
          <GroupName>Explore</GroupName>
        </Group>
        <Group $w={240}>
          <GroupBody $pad={3}>
            <BigButton w={80} icon={<AdminIcon />} label="Administer" menu />
            <BigButton w={59} icon={<AccountIcon />} label="My" second="Account" />
            <Divider />
            <SmallList $pad={6}>
              <SmallItem $dim $gap={3}><SmallPerson />Users</SmallItem>
              <SmallItem $dim $gap={3}><SmallPerson two />Groups</SmallItem>
              <SmallItem $dim $gap={3}><SmallPerson lock />Locks</SmallItem>
            </SmallList>
          </GroupBody>
          <GroupName>Security</GroupName>
        </Group>
        <Group $w={248}>
          <GroupBody $pad={4}>
            <BigButton w={58} icon={<OptionsIcon />} label="Options" />
            <BigButton w={56} icon={<AuditIcon />} label="Auditing" />
            <BigButton w={59} icon={<IntegrityIcon />} label="Integrity" menu />
            <Divider />
            <BigButton w={54} icon={<TransferIcon />} label="Transfer" menu />
          </GroupBody>
          <GroupName>Model</GroupName>
        </Group>
        <Group $w={318}>
          <GroupBody $pad={4}>
            <BigButton w={58} icon={<SettingsIcon />} label="Settings" menu />
            <SmallList $pad={4}>
              <SmallItem $gap={5}><ClipIcon />UML Types</SmallItem>
              <SmallItem $gap={5}><ClipIcon folder />Model Types <Chevron /></SmallItem>
            </SmallList>
            <Divider />
            <BigButton w={70} icon={<ResourcesIcon />} label="Resources" />
            <BigButton w={50} icon={<ImagesIcon />} label="Images" />
          </GroupBody>
          <GroupName>Reference Data</GroupName>
        </Group>
        <Group $w={334}>
          <GroupBody $pad={5}>
            <BigButton w={76} icon={<ProjectVC />} label="Project-VC" />
            <BigButton w={76} icon={<PackageVC />} label="Package-VC" />
            <Divider />
            <SmallList $pad={6}>
              {["Work Offline", "Re-Synch Status", "Check Configuration"].map((t) => <SmallItem key={t}><VcSmall />{t}</SmallItem>)}
            </SmallList>
          </GroupBody>
          <GroupName>Version Control</GroupName>
        </Group>
        <Group $w={169}>
          <GroupBody $pad={0}>
            <SmallList $pad={12}>
              <SmallItem><ExplorerIcon />Windows Explorer</SmallItem>
              <SmallItem $gap={3}><OdbcIcon />ODBC Data Sources</SmallItem>
              <SmallItem><SysIcon />System Information</SmallItem>
            </SmallList>
          </GroupBody>
          <GroupName>User Tools</GroupName>
        </Group>
      </Ribbon>

      <Workspace>
        <Column $w={511}>
          <PanelHead $h={41} $left={4}><PanelTitle $up={2}>Browser</PanelTitle><HeadTools /></PanelHead>
          <Toolbar $left={6}>
            <ToolSlot $w={29}><svg width="20" height="19" viewBox="0 0 20 19"><path d="M2 18V6h7l2-2h8v14z" fill="#f5d0ae" stroke="#c08a55" strokeWidth="1.300" /><circle cx="5.500" cy="5" r="4" fill="#fff" stroke="#b5a61c" strokeWidth="2" strokeDasharray="2 1" /></svg></ToolSlot>
            <ToolSlot $w={28}><svg width="19" height="17" viewBox="0 0 19 17"><path d="M1 16V4h2l1-3h5l1 3h8v12z" fill="#f5d0ae" stroke="#c08a55" strokeWidth="1.300" /></svg></ToolSlot>
            <ToolSlot $w={28}><DiagramIcon /></ToolSlot>
            <ToolDivider $r={12} />
            <ToolSlot $w={29}><svg width="12" height="15" viewBox="0 0 12 15"><path d="M6 0l6 6.500H8V14H4V6.500H0z" fill="#8888dc" /></svg></ToolSlot>
            <ToolSlot $w={24}><svg width="12" height="15" viewBox="0 0 12 15"><path d="M6 15l6-6.500H8V1H4v7.500H0z" fill="#8888dc" /></svg></ToolSlot>
            <ToolDivider $r={10} />
            <ToolSlot $w={28}><svg width="16" height="20" viewBox="0 0 16 20"><circle cx="7" cy="5" r="4" fill="none" stroke="#888" strokeWidth="2.400" /><path d="M5.500 5c0-2 3-2 3 0v5l5 1.500c1 .5 1.500 1.500 1.300 3L14 20H6l-5-6c0-2 2-2 4.500 0z" fill="#8888dc" /></svg></ToolSlot>
            <ToolSlot $w={28}><Lines /></ToolSlot>
            <Tri dir="down" s={6} />
            <ToolSlot $w={9} $push><svg width="9" height="18" viewBox="0 0 9 18"><path d="M0 0l9 9-9 9z" fill="#8888dc" /></svg></ToolSlot>
          </Toolbar>
          <Strip h={46} left={8} top={9} tabs={["Project", "Context", "Diagram", "Resources"]} active="Project" />
          <Gap $h={11} />
          <TreeArea>
            <TreeList>
              {tree.map(([d, ex, icon, text, pad], i) => (
                <TreeRow key={i} $depth={d} $selected={i === 6} $wide={text.startsWith("«")}>
                  <Expander $open={ex === "open"}>
                    {ex === "open" && <svg width="10" height="7" viewBox="0 0 10 7"><path d="M.7 1L5 5.700 9.300 1" fill="none" stroke="#8a8a8a" strokeWidth="1.200" /></svg>}
                    {ex === "shut" && <svg width="10" height="12" viewBox="0 0 10 12"><path d="M3 1l4.700 5L3 11" fill="none" stroke="#8a8a8a" strokeWidth="1.200" /></svg>}
                  </Expander>
                  <TreeIcon $pad={pad}>{icon}</TreeIcon>
                  <TreeText>{text}</TreeText>
                </TreeRow>
              ))}
            </TreeList>
            <VScroll len={210} />
          </TreeArea>
          <HSplit $h={6} />
          <PanelHead $h={41} $left={4}><PanelTitle>Toolbox</PanelTitle><HeadTools /></PanelHead>
          <SearchRow>
            <SearchBox>Search<MagnifyDark /></SearchBox>
            <ToolSlot $w={42} $pad={7}><MagnifyBlue /></ToolSlot>
            <Lines />
          </SearchRow>
          <ToolList>
            <ToolHeader><svg width="7" height="7" viewBox="0 0 7 7"><path d="M7 0v7H0z" fill="#555" /></svg>SysML Block Definition</ToolHeader>
            {elements.map(([k, t]) => <ToolItem key={t}><ToolIcon>{<ElementIcon kind={k} />}</ToolIcon>{t}</ToolItem>)}
          </ToolList>
        </Column>

        <VSplit $w={6} />

        <Column $w={863}>
          <ViewFrame>
            <Breadcrumb>
              <Guillemet /><ToolSlot $w={33} /><DiagramIcon />
              <CrumbText>bdd [package] Structure [Structure]</CrumbText>
              <CrumbTools><Guillemet /><Tri dir="down" c="#000" /><Cross s={9} c="#000" w={2.200} /></CrumbTools>
            </Breadcrumb>
            <DocTabs>
              <DocTab $w={109} $clip>Scenarios</DocTab>
              <DocTab $w={184} $ls={0.2} $gap={5}><ReqIcon />Requirements</DocTab>
              <DocTab $w={249} $ls={0.28} $gap={3}><DiagramIcon line="#8f8f68" head="#7486c4" />Units and quantities</DocTab>
              <DocTab $w={133} $gap={3}><DiagramIcon line="#8f8f68" head="#7486c4" />Interfaces</DocTab>
              <DocTab $w={148} $active $gap={3}><DiagramIcon line="#8f8f68" head="#7486c4" />Structure</DocTab>
              <DocArrows><Tri dir="left" s={11} /><Tri dir="right" s={11} /></DocArrows>
            </DocTabs>
            <CanvasRow>
              <Canvas>
                <Frame>
                  <FrameName>
                    <svg width="257" height="33" viewBox="0 0 257 33"><path d="M0 0h255v10l-20 21.500H0z" fill="#fff" stroke="#927e7d" strokeWidth="1.500" /></svg>
                    <span><b>bdd</b>[package] Structure [Structure]</span>
                  </FrameName>
                </Frame>
                <Block $x={245} $y={72}>«block»<b>Cruise Control</b><b>System</b></Block>
                <Block $x={137} $y={267}>«block»<b>Distance Sensor</b></Block>
                <Block $x={348} $y={267}>«block»<b>Central Computer</b></Block>
              </Canvas>
              <VScroll len={72} />
            </CanvasRow>
            <ScrollTrack $across>
              <ScrollButton><Tri dir="left" /></ScrollButton><ScrollThumb $across $len={340} /><Spacer /><ScrollButton><Tri dir="right" /></ScrollButton>
            </ScrollTrack>
          </ViewFrame>
          <HSplit $h={7} />
          <PanelHead $h={42} $left={4}><PanelTitle $ls={-0.1}>Features</PanelTitle><HeadTools /></PanelHead>
          <Strip h={38} left={8} top={5} tabs={["Attributes", "Operations", "Receptions", "Parts / Properties", "Interaction Points"]} active="Parts / Properties" />
          <Gap $h={11} />
          <Table>
            <TableHead>{columns.map(([n, w], i) => <HeadCell key={n} $w={w} $last={i === 5}>{n}</HeadCell>)}</TableHead>
          </Table>
          <FeatureActions>
            <PushButton>All</PushButton><PushButton>None</PushButton><CheckBox $top={5} /><OptionLabel>Show Owned/Inherited</OptionLabel>
          </FeatureActions>
        </Column>

        <VSplit $w={6} />

        <Column $w={534}>
          <PanelHead $h={41} $left={4}><PanelTitle $up={2} $ls={-0.1}>Properties</PanelTitle><HeadTools /></PanelHead>
          <Toolbar $left={7}>
            <ToolSlot $w={31}><svg width="18" height="18" viewBox="0 0 18 18"><path d="M0 0h18v18H0z" fill="#a3bbd8" /><path d="M4 0h10v8H4zM4 11.500h10V18H4z" fill="#f0f3f7" /><path d="M7 14h2.500v4H7z" fill="#a3bbd8" /></svg></ToolSlot>
            <ToolSlot $w={26}><Lines w={16} /></ToolSlot>
            <ToolSlot $w={15}><Tri dir="down" s={6} /></ToolSlot>
            <ToolSlot $w={33}><svg width="19" height="18" viewBox="0 0 19 18"><path d="M1 2.500h17v14.500H1z" fill="#fff" stroke="#5b93c4" strokeWidth="1.600" /><path d="M7.500 4v13M1 5.500h17" stroke="#5b93c4" /><path d="M2 7l6-5 9-2v7l-4 1-3-2-3 4-2-2z" fill="#c4bd5c" stroke="#5f5c2c" /><path d="M17 0h2v8h-2z" fill="#888" /></svg></ToolSlot>
            <svg width="9" height="18" viewBox="0 0 9 18"><path d="M0 0l9 9-9 9z" fill="#b9b9ea" /></svg>
          </Toolbar>
          <Strip h={38} left={8} top={5} tabs={["Diagram", "Compartments", "Objects ZOrder"]} active="Compartments" />
          <Gap $h={11} />
          <PropsArea>
            <Gutter />
            <PropList>
              {compartments.map((c) => (
                <PropRow key={c}>
                  <PropName $selected={c.endsWith("...")}>{c.replace("*", "")}</PropName>
                  <CheckBox $top={5}>{c.endsWith("*") && <Check />}</CheckBox>
                </PropRow>
              ))}
            </PropList>
            <VScroll len={497} at={47} />
            <RightEdge />
          </PropsArea>
          <HSplit $h={6} />
          <PanelHead $h={42} $left={4}><PanelTitle $ls={0.3} $up={1}>System Output</PanelTitle><HeadTools /></PanelHead>
          <OutputBar><OutputBox $w={21} /><OutputBox $w={31} /><OutputBox $w={152} $track /><OutputBox $w={21} /></OutputBar>
        </Column>
      </Workspace>

      <Stroke width="170" height="86" viewBox="436 638 170 86">
        <path d="M441 718C462 717 480 715 495 711S520 706 528 701C536 696 540 694 546 688C552 682 557 680 561 674C566 668 572 664 577 660L586 653M567 658C573 652 580 652 586 650Q592 648 598 643C598 650 597 658 594 663Q592 668 591 672" fill="none" stroke="#f80808" strokeWidth="2.200" strokeLinecap="round" strokeLinejoin="round" />
      </Stroke>
    </Window>
  );
}
